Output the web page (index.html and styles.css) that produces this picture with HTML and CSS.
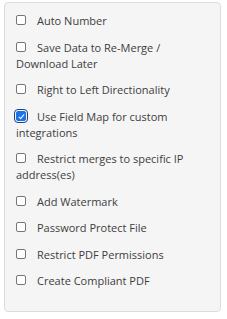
FILE: index.html
```html
<html>

<head>
    <link rel="stylesheet" href="styles.css">
</head>

<body>
    <div class="options">
        <label class="opt"><input type="checkbox" class="chk">Auto Number</label>
        <label class="opt"><input type="checkbox" class="chk">Save Data to Re-Merge / Download Later</label>
        <label class="opt"><input type="checkbox" class="chk">Right to Left Directionality</label>
        <label class="opt"><input type="checkbox" class="chk" checked>Use Field Map for custom integrations</label>
        <label class="opt"><input type="checkbox" class="chk">Restrict merges to specific IP address(es)</label>
        <label class="opt"><input type="checkbox" class="chk">Add Watermark</label>
        <label class="opt"><input type="checkbox" class="chk">Password Protect File</label>
        <label class="opt"><input type="checkbox" class="chk">Restrict PDF Permissions</label>
        <label class="opt"><input type="checkbox" class="chk">Create Compliant PDF</label>
    </div>
</body>

</html>
```
FILE: styles.css
```css
body {
    margin: 0;
    font-family: "Open Sans", sans-serif;
}

.options {
    margin: 2px 6px 8px 4px;
    padding: 10px 11px 11px 11px;
    background: #f5f5f5;
    border: 1px solid #d9dde2;
    border-radius: 4px;
}

.opt {
    display: block;
    font-size: 11px;
    line-height: 16px;
    color: #3d3d3d;
    margin-bottom: 10.5px;
}

.chk {
    -webkit-appearance: none;
    appearance: none;
    width: 10px;
    height: 10px;
    margin: 0 11px 0 0;
    border: 1px solid #767676;
    border-radius: 2px;
    background: #fff;
    vertical-align: 0;
    position: relative;
}

.chk:checked {
    background: #1a73e8;
    border-color: #1a73e8;
    outline: 1.5px solid #1f3f8f;
    outline-offset: 1px;
}

.chk:checked::after {
    content: "";
    position: absolute;
    left: 3px;
    top: 1px;
    width: 2px;
    height: 5px;
    border: solid #fff;
    border-width: 0 1.5px 1.5px 0;
    transform: rotate(40deg);
}
```
